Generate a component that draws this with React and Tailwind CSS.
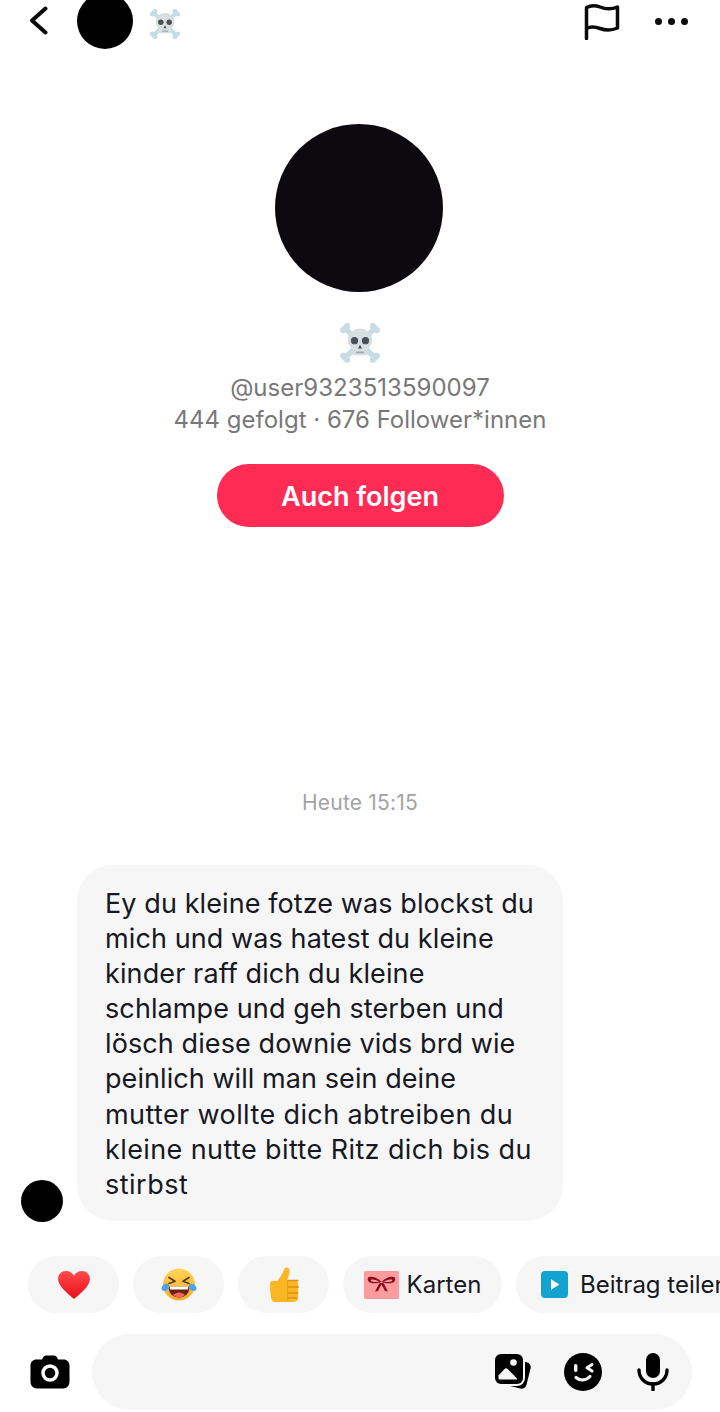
const font = { fontFamily: '"Inter","Liberation Sans",sans-serif' };

function Skull({ size }) {
  return (
    <svg width={size} height={size} viewBox="0 0 36 36" className="shrink-0">
      <g stroke="#c6dde3" strokeWidth="4.6" strokeLinecap="round">
        <path d="M5 5 L31 31" />
        <path d="M31 5 L5 31" />
      </g>
      <g fill="#c6dde3">
        <circle cx="3.5" cy="7" r="2.6" /><circle cx="7" cy="3.5" r="2.6" />
        <circle cx="32.5" cy="7" r="2.6" /><circle cx="29" cy="3.5" r="2.6" />
        <circle cx="3.5" cy="29" r="2.6" /><circle cx="7" cy="32.5" r="2.6" />
        <circle cx="32.5" cy="29" r="2.6" /><circle cx="29" cy="32.5" r="2.6" />
      </g>
      <path d="M18 5.5c6.2 0 10.5 4.3 10.5 10 0 3.400-1.500 5.800-4 7.300v3.700c0 1.200-.9 2-2 2h-9c-1.100 0-2-.8-2-2v-3.700c-2.500-1.500-4-3.900-4-7.300 0-5.700 4.300-10 10.500-10z" fill="#d8dfe1" />
      <circle cx="13.3" cy="16" r="3.100" fill="#4a5156" />
      <circle cx="22.700" cy="16" r="3.100" fill="#4a5156" />
      <path d="M18 19.500l1.800 3.300h-3.600z" fill="#4a5156" />
      <path d="M14.500 25.300h7v1.500h-7z" fill="#a3adb1" />
    </svg>
  );
}

function Heart() {
  return (
    <svg width="34" height="30" viewBox="0 0 36 32">
      <defs>
        <linearGradient id="h" x1="0" y1="0" x2="0" y2="1">
          <stop offset="0" stopColor="#ff4a4a" />
          <stop offset="1" stopColor="#e8101c" />
        </linearGradient>
      </defs>
      <path d="M18 31C13 26 1 18 1 9.500 1 4.500 4.800 1 9.500 1c3.600 0 6.800 2 8.500 5.200C19.700 3 22.900 1 26.500 1 31.200 1 35 4.500 35 9.500 35 18 23 26 18 31z" fill="url(#h)" />
    </svg>
  );
}

function Laugh() {
  return (
    <svg width="36" height="36" viewBox="0 0 36 36">
      <defs>
        <linearGradient id="l" x1="0" y1="0" x2="0" y2="1">
          <stop offset="0" stopColor="#fdd55a" />
          <stop offset="1" stopColor="#f6a92c" />
        </linearGradient>
      </defs>
      <circle cx="18" cy="17.500" r="16" fill="url(#l)" />
      <path d="M8 10.500l6 3.800-6 2.200M28 10.500l-6 3.800 6 2.200" fill="none" stroke="#5b3a17" strokeWidth="1.700" strokeLinecap="round" strokeLinejoin="round" />
      <path d="M7.500 19.500h21c0 7-4.500 11-10.500 11S7.500 26.500 7.500 19.500z" fill="#6b2413" />
      <path d="M8.500 19.500h19l-.6 3H9.100z" fill="#fff" />
      <path d="M12 28c1.500-1.800 3.600-2.600 6-2.600s4.500.8 6 2.600c-1.600 1.600-3.700 2.500-6 2.500s-4.400-.9-6-2.500z" fill="#f2685a" />
      <path d="M0.500 21.500c0-2.500 2.500-4.800 5-4.800 1.800 0 2.500 1 2.500 2.300 0 3-2.400 5-4.500 5-1.800 0-3-.8-3-2.500zM35.500 21.500c0-2.500-2.500-4.800-5-4.800-1.800 0-2.500 1-2.500 2.300 0 3 2.400 5 4.500 5 1.800 0 3-.8 3-2.500z" fill="#4da3e8" />
    </svg>
  );
}

function Thumb() {
  return (
    <svg width="32" height="36" viewBox="0 0 32 36">
      <path d="M2 16.500c0-1.500 1-2.500 2.500-2.500h5c2-3.500 5-6.500 6-10 .5-2 1.200-3.500 3-3.500 2.300 0 3.300 2.500 3 5-.3 2.500-1.500 5-2.300 7.500h7.300c2 0 3.500 1.300 3.500 3.200v14.300c0 2.800-2 4.500-4.500 4.500H8c-3.300 0-4.500-2-5-4.500-.5-3-1-9-1-14z" fill="#fbb623" />
      <path d="M20 13.500h10M19.500 20h11M19.500 26h10.500M19.500 31h9" stroke="#e08f13" strokeWidth="1.300" strokeLinecap="round" />
      <path d="M19.500 13.500v21" stroke="#e9a01c" strokeWidth="1" />
    </svg>
  );
}

function Bow() {
  return (
    <svg width="35" height="28" viewBox="0 0 35 28">
      <rect width="35" height="28" rx="1.500" fill="#ff9a9f" />
      <path d="M17.500 11C14 7 9 5 5 6c-1.800.5-1.500 3-.5 4.500C6 12.500 12 13 17.500 11c5.500 2 11.500 1.500 13-.5 1-1.500 1.300-4-.5-4.500-4-1-9 1-12.500 5z" fill="#8c0f1f" />
      <path d="M7 8.500c3-.3 6 .7 8 2.200-3 .7-6 .4-8-.4zM28 8.500c-3-.3-6 .7-8 2.200 3 .7 6 .4 8-.4z" fill="#ff9a9f" />
      <path d="M15.500 12l-4.500 8.500 3-.5 3.500-6.500 3.500 6.500 3 .5-4.500-8.500z" fill="#8c0f1f" />
    </svg>
  );
}

function Play() {
  return (
    <svg width="27" height="27" viewBox="0 0 27 27">
      <rect width="27" height="27" rx="4" fill="#12a3cf" />
      <path d="M10 8.200v10.600l8.400-5.300z" fill="#fff" />
    </svg>
  );
}

function Chip({ children, className }) {
  return (
    <div className={`h-[57px] shrink-0 rounded-full bg-[#f6f6f6] flex items-center justify-center ${className}`}>
      {children}
    </div>
  );
}

const lines = [
  ["Ey du kleine fotze was blockst du", "tracking-[0.09px]"],
  ["mich und was hatest du kleine", "tracking-[0.1px]"],
  ["kinder raff dich du kleine", "tracking-[0.11px]"],
  ["schlampe und geh sterben und", "tracking-[0.1px]"],
  ["lösch diese downie vids brd wie", "tracking-[0.1px]"],
  ["peinlich will man sein deine", "tracking-[0.07px]"],
  ["mutter wollte dich abtreiben du", "tracking-[0.39px]"],
  ["kleine nutte bitte Ritz dich bis du", "tracking-[0.4px]"],
  ["stirbst", "tracking-[0.5px]"],
];

export default function App() {
  return (
    <div className="w-[720px] h-[1412px] overflow-hidden bg-white flex flex-col" style={font}>
      <header className="h-[42px] shrink-0 flex items-center pl-[29px] pr-[32px]">
        <svg width="19" height="29" viewBox="0 0 19 29" className="shrink-0 -mt-[1px]">
          <path d="M16.500 2.500L3 14.500l13.500 12" fill="none" stroke="#0b0b0b" strokeWidth="4" strokeLinecap="round" strokeLinejoin="round" />
        </svg>
        <div className="w-[56px] h-[56px] shrink-0 rounded-full bg-black ml-[29px]" />
        <div className="ml-[16px] mt-[6px]"><Skull size={32} /></div>
        <svg width="36" height="37" viewBox="0 0 36 37" className="ml-auto shrink-0">
          <path d="M2.500 35.500V4.500C7 2 11 2 16 4s10 3 17.500 0v21c-7 3-12 2.500-17.500.5S7 23 2.500 25.500" fill="none" stroke="#0b0b0b" strokeWidth="3.500" strokeLinecap="round" strokeLinejoin="round" />
        </svg>
        <div className="ml-[35px] flex gap-[6px] shrink-0">
          <span className="w-[7px] h-[7px] rounded-full bg-[#0b0b0b]" />
          <span className="w-[7px] h-[7px] rounded-full bg-[#0b0b0b]" />
          <span className="w-[7px] h-[7px] rounded-full bg-[#0b0b0b]" />
        </div>
      </header>

      <section className="flex flex-col items-center">
        <div className="w-[168px] h-[168px] rounded-full bg-[#0d0a0f] mt-[82px] mr-[2px]" />
        <div className="mt-[30px]"><Skull size={42} /></div>
        <div className="mt-[8px] text-[24px] leading-[32px] text-[#787878] tracking-[0.03px]">@user9323513590097</div>
        <div className="text-[24px] leading-[32px] text-[#787878] whitespace-nowrap">444 gefolgt · 676 Follower*innen</div>
        <div className="mt-[28px] w-[287px] h-[63px] rounded-full bg-[#fe2c55] text-white font-semibold text-[27px] flex items-center justify-center pt-[3px]">Auch folgen</div>
      </section>

      <div className="mt-[263px] text-center text-[21px] leading-[26px] text-[#a3a3a3] tracking-[0.2px]">Heute 15:15</div>

      <section className="mt-[49px] pl-[21px] flex items-end">
        <div className="w-[42px] h-[42px] rounded-full bg-black shrink-0 -mb-[1px]" />
        <div className="ml-[14px] w-[486px] h-[356px] rounded-[36px] bg-[#f6f6f6] pl-[28px] pt-[21px]">
          {lines.map(([l, t]) => (
            <div key={l} className={`text-[27px] leading-[35.1px] text-[#161823] whitespace-nowrap ${t}`}>{l}</div>
          ))}
        </div>
      </section>

      <section className="mt-[35px] pl-[28px] flex gap-[14px]">
        <Chip className="w-[91px]"><Heart /></Chip>
        <Chip className="w-[91px]"><Laugh /></Chip>
        <Chip className="w-[91px]"><Thumb /></Chip>
        <Chip className="w-[159px] gap-[8px] text-[24px] text-[#161823]"><Bow /><span>Karten</span></Chip>
        <Chip className="w-[240px] justify-start pl-[25px] gap-[12px] text-[24px] text-[#161823] whitespace-nowrap"><Play /><span>Beitrag teilen</span></Chip>
      </section>

      <section className="mt-[21px] pl-[30px] flex items-center">
        <svg width="40" height="34" viewBox="0 0 40 34" className="shrink-0 mr-[22px]">
          <path d="M13 2.500C13.800 1 15 .5 16.500.5h7C25 .5 26.200 1 27 2.500l1 2h5.500c3.500 0 6 2.500 6 6v16c0 4-2.500 7-6.500 7H7c-4 0-6.500-3-6.500-7v-16c0-3.500 2.500-6 6-6H12z" fill="#000" />
          <circle cx="20" cy="18" r="7" fill="none" stroke="#fff" strokeWidth="3.500" />
        </svg>
        <div className="w-[600px] h-[76px] rounded-full bg-[#f6f6f6] flex items-center justify-end pr-[23px]">
          <svg width="38" height="38" viewBox="0 0 38 38" className="shrink-0">
            <rect x="9" y="7" width="26" height="27" rx="5" fill="#000" transform="rotate(14 22 20)" />
            <rect x="-1" y="-1" width="32" height="34" rx="8" fill="#f6f6f6" />
            <rect x="1" y="1" width="28" height="30" rx="6" fill="#000" />
            <circle cx="19.500" cy="9.500" r="3.300" fill="#f6f6f6" />
            <path d="M4.500 22.500l6-6.500c1-1 2.200-1 3.200 0l9.300 9.500v1H6c-1 0-1.500-.5-1.500-1.500z" fill="#f6f6f6" />
          </svg>
          <svg width="38" height="38" viewBox="0 0 38 38" className="shrink-0 ml-[32px]">
            <circle cx="19" cy="19" r="19" fill="#000" />
            <rect x="10" y="11" width="3.400" height="8" rx="1.700" fill="#f6f6f6" />
            <path d="M28 11.500l-5 3.300 5 3.300" fill="none" stroke="#f6f6f6" strokeWidth="3" strokeLinecap="round" strokeLinejoin="round" />
            <path d="M12 24.500c4 3.600 10 3.300 14-1" fill="none" stroke="#f6f6f6" strokeWidth="3.200" strokeLinecap="round" />
          </svg>
          <svg width="32" height="38" viewBox="0 0 32 38" className="shrink-0 ml-[35px]">
            <rect x="9" y="0" width="14" height="25" rx="7" fill="#000" />
            <path d="M2 17c0 8 6 14 14 14s14-6 14-14" fill="none" stroke="#000" strokeWidth="3.400" strokeLinecap="round" />
            <path d="M16 31v6" stroke="#000" strokeWidth="3.400" strokeLinecap="round" />
          </svg>
        </div>
      </section>
    </div>
  );
}
